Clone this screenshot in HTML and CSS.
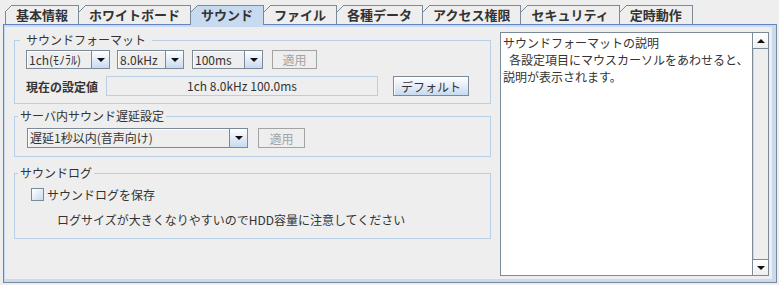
FILE: index.html
```html
<!DOCTYPE html>
<html lang="ja">
  <head>
    <meta charset="UTF-8" />
    <meta name="viewport" content="width=device-width, initial-scale=1.0" />
    <title>サウンド設定</title>

    <link rel="stylesheet" href="styles.css">
  </head>
  <body>
    <nav class="tabs">
      <span class="tab">基本情報</span>
      <span class="tab">ホワイトボード</span>
      <span class="tab selected">サウンド</span>
      <span class="tab">ファイル</span>
      <span class="tab">各種データ</span>
      <span class="tab">アクセス権限</span>
      <span class="tab">セキュリティ</span>
      <span class="tab">定時動作</span>
    </nav>

    <main class="panel">
      <div class="settings">
        <fieldset class="group group-format">
          <legend class="wide">サウンドフォーマット</legend>
          <div class="row row-combos">
            <div class="combo combo-ch"><span class="value">1ch(ﾓﾉﾗﾙ)</span><span class="arrow"></span></div>
            <div class="combo combo-rate"><span class="value">8.0kHz</span><span class="arrow"></span></div>
            <div class="combo combo-len"><span class="value">100ms</span><span class="arrow"></span></div>
            <button class="btn disabled btn-apply">適用</button>
          </div>
          <div class="row row-current">
            <span class="current-label">現在の設定値</span>
            <span class="current-value">1ch 8.0kHz 100.0ms</span>
            <button class="btn btn-default">デフォルト</button>
          </div>
        </fieldset>

        <fieldset class="group group-delay">
          <legend>サーバ内サウンド遅延設定</legend>
          <div class="row row-delay">
            <div class="combo combo-delay"><span class="value">遅延1秒以内(音声向け)</span><span class="arrow"></span></div>
            <button class="btn disabled btn-apply2">適用</button>
          </div>
        </fieldset>

        <fieldset class="group group-log">
          <legend>サウンドログ</legend>
          <label class="check-row"><span class="checkbox"></span>サウンドログを保存</label>
          <p class="note">ログサイズが大きくなりやすいのでHDD容量に注意してください</p>
        </fieldset>
      </div>

      <div class="info">
        <div class="info-text">サウンドフォーマットの説明
&ensp;各設定項目にマウスカーソルをあわせると、
説明が表示されます。</div>
        <div class="scrollbar">
          <span class="scroll-btn up"></span>
          <span class="scroll-btn down"></span>
        </div>
      </div>
    </main>
  </body>
</html>
```

FILE: styles.css
```css
body {
  margin: 0;
  height: 285px;
  overflow: hidden;
  background-color: #eeeeee;
  font-family: "Noto Sans CJK JP", "Noto Sans", sans-serif;
  font-size: 12px;
  color: #333333;
}

/* tabs */
.tabs {
  position: relative;
  z-index: 1;
  display: flex;
  height: 19px;
  padding: 5px 0 0 5px;
}

.tab {
  position: relative;
  height: 18px;
  line-height: 18px;
  padding: 0 10px;
  margin-left: -1px;
  border: 1px solid #7a8a99;
  border-bottom: none;
  background-color: #eeeeee;
  font-size: 13px;
  font-weight: bold;
  color: #333333;
}

.tab:first-child {
  margin-left: 0;
}

.tab::before {
  content: "";
  position: absolute;
  top: -1px;
  left: 0;
  width: 7px;
  height: 7px;
  background: linear-gradient(to bottom right, #eeeeee 0 44%, #7a8a99 44% 57%, transparent 57%);
}

.tab:first-child::before {
  left: -1px;
}

.tab.selected {
  z-index: 2;
  height: 19px;
  background-color: #c8daf0;
}

/* content panel */
.panel {
  display: flex;
  align-items: flex-start;
  gap: 9px;
  height: 244px;
  margin: 0 2px 0 3px;
  padding: 7px 7px 6px 10px;
  border: 1px solid #6382bf;
  border-right-color: #7a8a99;
  border-bottom-color: #7a8a99;
  box-shadow: inset 1px 2px #c8daf0, inset -4px -3px #c8daf0;
}

.settings {
  display: flex;
  flex-direction: column;
  width: 477px;
  margin-top: 1px;
}

.group {
  margin: 0;
  min-width: 0;
  padding: 0 0 0 3px;
  border: 1px solid #b8cfe5;
}

.group legend {
  padding: 0 2px;
  line-height: 14px;
  color: #333333;
}

.group legend.wide {
  margin-left: 2px;
  padding: 0 6px;
}

.group-format {
  padding-bottom: 7px;
}

.group-delay {
  margin-top: 5px;
  padding-bottom: 8px;
}

.group-log {
  margin-top: 9px;
  padding-bottom: 10px;
}

.row {
  display: flex;
  align-items: center;
}

.row-combos {
  height: 19px;
  margin: 3px 0 0 8px;
}

.row-current {
  height: 20px;
  margin: 7px 0 0 8px;
}

.row-delay {
  height: 20px;
  margin: 5px 0 0 9px;
}

/* combo boxes */
.combo {
  display: flex;
  height: 100%;
}

.combo .value {
  flex: 1;
  padding-left: 2px;
  border: 1px solid #7a8a99;
  background-color: #eeeeee;
  box-shadow: inset 1px 1px #ffffff;
  line-height: 17px;
  white-space: nowrap;
  overflow: hidden;
}

.row-delay .combo .value {
  line-height: 18px;
}

.combo .arrow {
  display: flex;
  align-items: center;
  justify-content: center;
  width: 17px;
  border: 1px solid #7a8a99;
  border-left: none;
  background: linear-gradient(#ffffff, #c8daf0);
}

.combo .arrow::after {
  content: "";
  border-left: 4px solid transparent;
  border-right: 4px solid transparent;
  border-top: 4px solid #111111;
}

.combo-ch {
  width: 84px;
}

.combo-rate {
  width: 67px;
  margin-left: 7px;
}

.combo-len {
  width: 71px;
  margin-left: 8px;
}

.combo-delay {
  width: 221px;
}

/* buttons */
.btn {
  height: 100%;
  padding: 0;
  border: 1px solid #7a8a99;
  background: linear-gradient(#ffffff, #c8daf0);
  box-shadow: inset 1px 1px #ffffff;
  font-family: inherit;
  font-size: 12px;
  color: #333333;
}

.btn.disabled {
  border-color: #a3a3a3;
  background: #eeeeee;
  box-shadow: none;
  color: #a3a3a3;
}

.btn-apply {
  width: 45px;
  margin-left: 9px;
}

.btn-apply2 {
  width: 47px;
  margin-left: 10px;
}

.btn-default {
  width: 76px;
  margin-left: 15px;
}

.current-label {
  width: 80px;
  font-weight: bold;
}

.current-value {
  box-sizing: border-box;
  width: 272px;
  height: 100%;
  border: 1px solid #b8cfe5;
  line-height: 18px;
  text-align: center;
}

/* sound log */
.check-row {
  display: flex;
  align-items: center;
  gap: 3px;
  height: 16px;
  margin: 6px 0 0 13px;
}

.checkbox {
  width: 11px;
  height: 11px;
  border: 1px solid #7a8a99;
  background: linear-gradient(to bottom right, #ffffff, #c8daf0);
}

.note {
  margin: 10px 0 0 39px;
  line-height: 16px;
}

/* description box */
.info {
  display: flex;
  width: 267px;
  height: 242px;
  border: 1px solid #7a8a99;
  background-color: #ffffff;
}

.info-text {
  flex: 1;
  padding: 1px 2px;
  line-height: 17px;
  white-space: pre-wrap;
}

.scrollbar {
  display: flex;
  flex-direction: column;
  justify-content: space-between;
  width: 15px;
  border-left: 1px solid #7a8a99;
  background-color: #eeeeee;
  box-shadow: inset 1px 0 #c8daf0;
}

.scroll-btn {
  display: flex;
  align-items: center;
  justify-content: center;
  height: 15px;
  background: linear-gradient(#ffffff, #eeeeee);
  box-shadow: inset 1px 1px #ffffff;
}

.scroll-btn.up {
  border-bottom: 1px solid #7a8a99;
}

.scroll-btn.down {
  border-top: 1px solid #7a8a99;
}

.scroll-btn.up::after {
  content: "";
  border-left: 4px solid transparent;
  border-right: 4px solid transparent;
  border-bottom: 4px solid #111111;
}

.scroll-btn.down::after {
  content: "";
  border-left: 4px solid transparent;
  border-right: 4px solid transparent;
  border-top: 4px solid #111111;
}
```
